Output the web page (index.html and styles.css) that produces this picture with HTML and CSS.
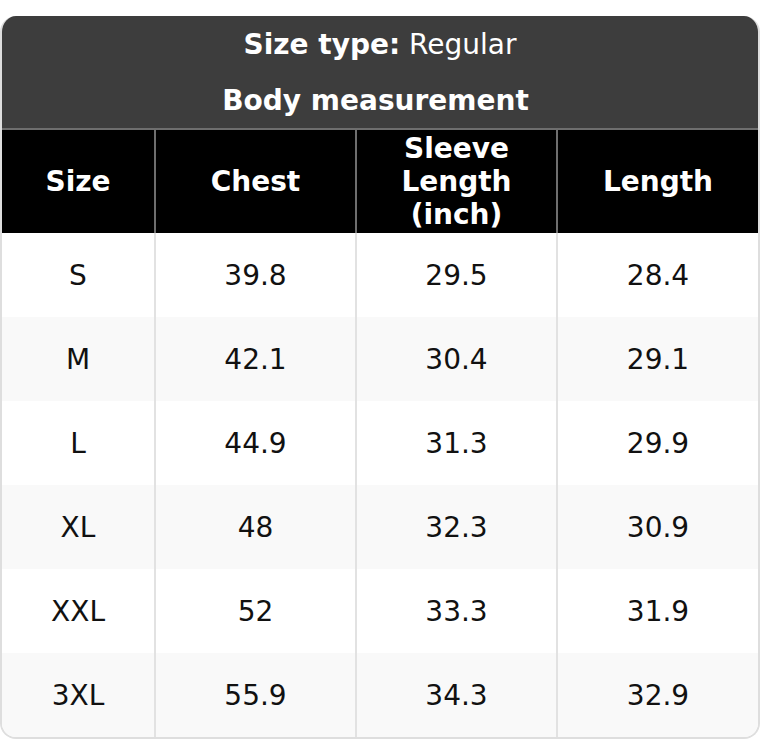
FILE: index.html
```html
<!DOCTYPE html>
<html>
<head>
<meta charset="utf-8">
<link rel="stylesheet" href="styles.css">
</head>
<body>
<div class="chart">
  <div class="caption">
    <div class="cap-line"><span><b>Size type:</b> Regular</span></div>
    <div class="cap-line"><span><b>Body measurement</b>&nbsp;</span></div>
  </div>
  <div class="grid head">
    <div class="cell">Size</div>
    <div class="cell">Chest</div>
    <div class="cell">Sleeve<br>Length<br>(inch)</div>
    <div class="cell">Length</div>
  </div>
  <div class="grid row"><div class="cell">S</div><div class="cell">39.8</div><div class="cell">29.5</div><div class="cell">28.4</div></div>
  <div class="grid row alt"><div class="cell">M</div><div class="cell">42.1</div><div class="cell">30.4</div><div class="cell">29.1</div></div>
  <div class="grid row"><div class="cell">L</div><div class="cell">44.9</div><div class="cell">31.3</div><div class="cell">29.9</div></div>
  <div class="grid row alt"><div class="cell">XL</div><div class="cell">48</div><div class="cell">32.3</div><div class="cell">30.9</div></div>
  <div class="grid row"><div class="cell">XXL</div><div class="cell">52</div><div class="cell">33.3</div><div class="cell">31.9</div></div>
  <div class="grid row alt"><div class="cell">3XL</div><div class="cell">55.9</div><div class="cell">34.3</div><div class="cell">32.9</div></div>
</div>
</body>
</html>
```

FILE: styles.css
```css
html, body {
  margin: 0;
  padding: 0;
  background: #ffffff;
}
body {
  font-family: "DejaVu Sans", "Liberation Sans", sans-serif;
  font-size: 28px;
  color: #111111;
}
.chart {
  margin-top: 16px;
  width: 760px;
  box-sizing: border-box;
  border: 2px solid #dedede;
  border-top: 0;
  border-radius: 16px;
  overflow: hidden;
}
.caption {
  background: #3d3d3d;
  color: #ffffff;
  border-bottom: 2px solid #6e6e6e;
  margin: 0 -2px;
}
.cap-line {
  height: 56px;
  display: flex;
  align-items: center;
  justify-content: center;
  line-height: 33px;
}
.cap-line b {
  font-weight: bold;
}
.grid {
  display: grid;
  grid-template-columns: 154px 201px 201px 1fr;
}
.cell {
  display: flex;
  align-items: center;
  justify-content: center;
  text-align: center;
  line-height: 33px;
  box-sizing: border-box;
}
.head {
  background: #000000;
  color: #ffffff;
  font-weight: bold;
  height: 103px;
}
.head .cell {
  border-right: 2px solid #6e6e6e;
}
.head .cell:last-child {
  border-right: 0;
}
.row {
  height: 84px;
  background: #ffffff;
}
.row.alt {
  background: #f9f9f9;
}
.row .cell {
  border-right: 2px solid #e2e2e2;
}
.row .cell:last-child {
  border-right: 0;
}
```
